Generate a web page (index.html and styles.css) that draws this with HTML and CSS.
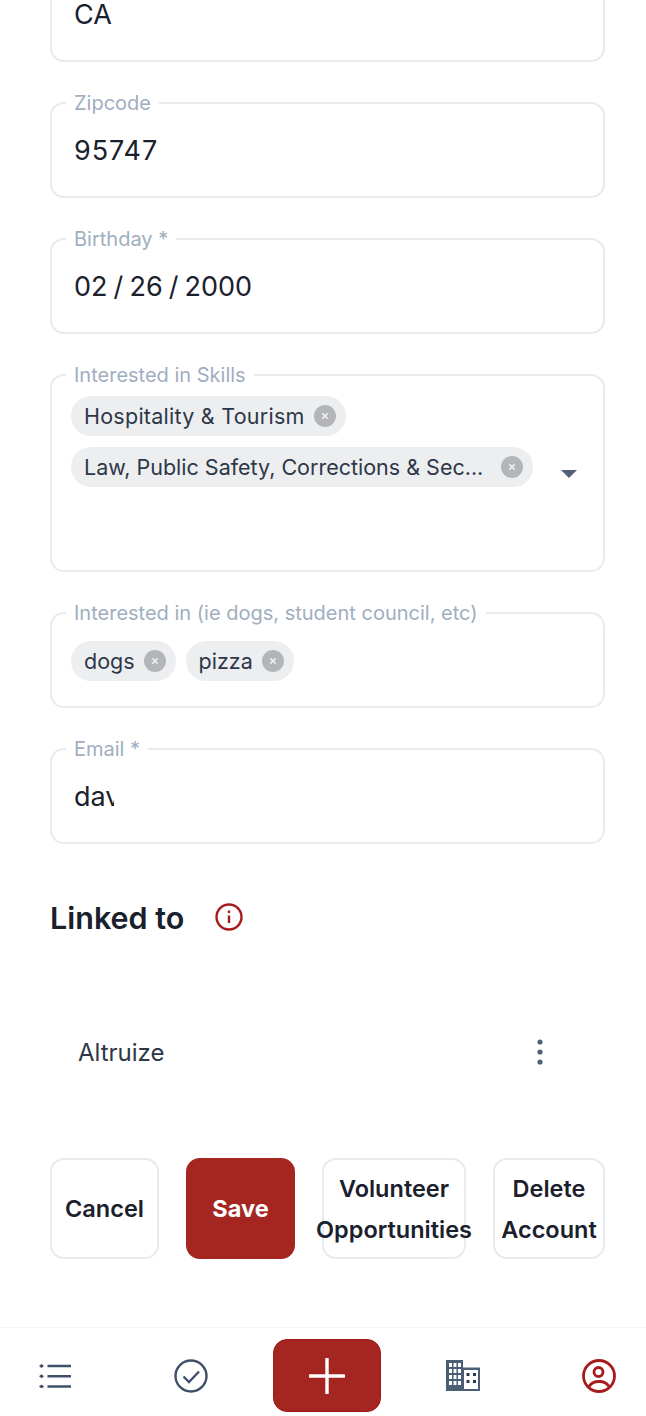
FILE: index.html
```html
<!DOCTYPE html>
<html lang="en">
<head>
<meta charset="utf-8">
<title>Profile</title>
<link rel="stylesheet" href="styles.css">
</head>
<body>
<div class="page">
  <main class="form">
    <fieldset class="field first"><div class="value">CA</div></fieldset>
    <fieldset class="field"><legend>Zipcode</legend><div class="value zip">95747</div></fieldset>
    <fieldset class="field"><legend>Birthday *</legend><div class="value date">02 / 26 / 2000</div></fieldset>
    <fieldset class="field skills"><legend>Interested in Skills</legend>
      <div class="chips stack">
        <span class="chip wide">Hospitality &amp; Tourism<i class="x"><svg viewBox="0 0 10 10"><path d="M3.800 3.800l2.400 2.400M6.200 3.800l-2.400 2.400"/></svg></i></span>
        <span class="chip trunc">Law, Public Safety, Corrections &amp; Sec...<i class="x"><svg viewBox="0 0 10 10"><path d="M3.800 3.800l2.400 2.400M6.200 3.800l-2.400 2.400"/></svg></i></span>
      </div>
      <span class="caret"></span>
    </fieldset>
    <fieldset class="field"><legend>Interested in (ie dogs, student council, etc)</legend>
      <div class="chips">
        <span class="chip">dogs<i class="x"><svg viewBox="0 0 10 10"><path d="M3.800 3.800l2.400 2.400M6.200 3.800l-2.400 2.400"/></svg></i></span>
        <span class="chip">pizza<i class="x"><svg viewBox="0 0 10 10"><path d="M3.800 3.800l2.400 2.400M6.200 3.800l-2.400 2.400"/></svg></i></span>
      </div>
    </fieldset>
    <fieldset class="field"><legend>Email *</legend><div class="value clip">david@altruize.com</div></fieldset>

    <div class="linked-head">
      <h2>Linked to</h2>
      <svg class="info" viewBox="0 0 28 28"><circle cx="14" cy="14" r="12.500"/><path d="M14 12.500v7.500M14 7.500v2.400"/></svg>
    </div>
    <div class="linked-row">
      <span>Altruize</span>
      <svg class="kebab" viewBox="0 0 8 28"><circle cx="4" cy="4" r="2.600"/><circle cx="4" cy="14" r="2.600"/><circle cx="4" cy="24" r="2.600"/></svg>
    </div>
    <div class="actions">
      <button class="btn">Cancel</button>
      <button class="btn primary">Save</button>
      <button class="btn">Volunteer<br>Opportunities</button>
      <button class="btn">Delete<br>Account</button>
    </div>
  </main>
  <nav class="nav">
    <svg class="ico list" viewBox="0 0 32 24"><path class="ln" d="M8.500 2h23.500M8.500 12.300h23.500M8.500 22.500h23.500"/><path d="M2.500 0l2.500 2-2.500 2L0 2zM2.500 10.300l2.500 2-2.500 2-2.500-2zM2.500 20.500l2.500 2-2.500 2-2.500-2z"/></svg>
    <svg class="ico round" viewBox="0 0 34 34"><circle class="ln" cx="17" cy="17" r="15.500"/><path class="ln" d="M9.500 17.500l5.500 5.500 10-10.500"/></svg>
    <button class="add"><svg viewBox="0 0 36 36"><path d="M18 1v34M1 18h34"/></svg></button>
    <svg class="ico bld" viewBox="0 0 34 31"><path class="fill" fill-rule="evenodd" d="M0 0h17v7.500h17V31H0zM3 3v4h3V3zM7.500 3v4h3V3zM12 3v4h3V3zM3 9v4h3V9zM7.500 9v4h3V9zM12 9v4h3V9zM3 15v4h3v-4zM7.500 15v4h3v-4zM12 15v4h3v-4zM3 21v4h3v-4zM7.500 21v4h3v-4zM12 21v4h3v-4zM18 10v19h14V10z"/><path class="dot" d="M20.500 13h3v3h-3zM27 13h3v3h-3zM20.500 20h3v3h-3zM27 20h3v3h-3z"/></svg>
    <svg class="ico user" viewBox="0 0 34 34"><circle class="ln" cx="17" cy="17" r="15.500"/><circle class="ln" cx="16.500" cy="13" r="4.500"/><path class="ln" d="M7 27.500c2-3.500 5.500-5 10-5s8 1.500 10 5"/></svg>
  </nav>
</div>
</body>
</html>
```
FILE: styles.css
```css
* { box-sizing: border-box; }
html, body { margin: 0; padding: 0; background: #fff; }
body {
  width: 646px;
  height: 1416px;
  overflow: hidden;
  font-family: "Inter", "Liberation Sans", sans-serif;
  color: #1a202c;
}
.page { height: 1416px; display: flex; flex-direction: column; overflow: hidden; }
.form { flex: 1; min-height: 0; padding: 0 41px 0 50px; margin-top: -33px; }

.field {
  position: relative;
  display: block;
  margin: 0 0 31px;
  padding: 0 0 0 22px;
  width: 555px;
  height: 105px;
  border: 2px solid #e7ebf0;
  border-radius: 14px;
  min-width: 0;
}
.field.first { height: 95px; margin-bottom: 31px; }
.field.skills { height: 207px; }
.field legend {
  margin-left: -8px;
  padding: 0 8px;
  font-size: 20px;
  line-height: 20px;
  color: #a0aec0;
  white-space: nowrap;
}
.value {
  font-size: 27px;
  line-height: 32px;
  padding-top: 22px;
  color: #1a202c;
  white-space: nowrap;
}
.zip { letter-spacing: 0.9px; }
.date { word-spacing: -1.5px; }
.first .value { padding-top: 0; margin-top: 30px; }
.clip { width: 40px; overflow: hidden; }

.chips { display: flex; gap: 10px; margin: 18px 0 0 -3px; }
.chips.stack { flex-direction: column; align-items: flex-start; gap: 11px; margin-top: 11px; }
.chip {
  display: inline-flex;
  align-items: center;
  height: 40px;
  padding: 0 10px 0 13px;
  border-radius: 20px;
  background: #edeef0;
  font-size: 21.5px;
  color: #2d3748;
  white-space: nowrap;
}
.wide { letter-spacing: 0.25px; }
.x {
  display: block;
  width: 22px;
  height: 22px;
  margin-left: 9px;
  border-radius: 50%;
  background: #b3b5b9;
}
.trunc .x { margin-left: 18px; }
.x svg { display: block; width: 22px; height: 22px; }
.x path { fill: none; stroke: #edeef0; stroke-width: 0.7; }
.caret {
  position: absolute;
  left: 509px;
  top: 85px;
  border-style: solid;
  border-width: 8px 8.5px 0;
  border-color: #52617a transparent transparent;
}

.linked-head { display: flex; align-items: center; gap: 31px; margin-top: 48px; height: 50px; }
.linked-head h2 { margin: 0; font-size: 30.5px; font-weight: 600; color: #1a202c; }
.info { width: 28px; height: 28px; fill: none; stroke: #a61c1c; stroke-width: 2.4; }
.linked-row {
  display: flex;
  align-items: center;
  justify-content: space-between;
  height: 50px;
  margin-top: 85px;
  padding: 0 61px 0 28px;
  font-size: 24px;
  color: #2d3748;
}
.kebab { width: 8px; height: 28px; fill: #52617a; }

.actions {
  display: grid;
  grid-template-columns: 109px 109px 144px 112px;
  gap: 27px;
  width: 555px;
  margin-top: 81px;
}
.btn {
  height: 101px;
  padding: 0;
  background: #fff;
  border: 2px solid #e7ebf0;
  border-radius: 14px;
  font: 600 23.5px/41px "Inter", "Liberation Sans", sans-serif;
  color: #1a202c;
  white-space: nowrap;
  display: flex;
  flex-direction: column;
  align-items: center;
  justify-content: center;
  text-align: center;
}
.btn.primary { background: #a52520; border-color: #a52520; color: #fff; font-weight: 700; }

.nav {
  flex: none;
  height: 89px;
  margin-left: -13px;
  padding-top: 7px;
  border-top: 1px solid #f7f7f7;
  display: grid;
  grid-template-columns: repeat(5, 136px);
  align-items: center;
  justify-items: center;
}
.ico { display: block; fill: #3f5068; }
.ico .ln { fill: none; stroke: #3f5068; stroke-width: 2.4; }
.list { width: 32px; height: 24px; }
.round { width: 34px; height: 34px; }
.bld { width: 34px; height: 31px; }
.bld .fill { fill: #4b5e75; }
.bld .dot { fill: #2a3a52; }
.user { width: 34px; height: 34px; }
.user .ln { stroke: #a61c1c; stroke-width: 2.8; }
.add {
  width: 108px;
  height: 73px;
  padding: 0;
  border: 1px solid #a11818;
  border-radius: 14px;
  background: #a52520;
  display: flex;
  align-items: center;
  justify-content: center;
}
.add svg { width: 36px; height: 36px; }
.add path { fill: none; stroke: #fff; stroke-width: 3.4; stroke-linecap: round; }
```
